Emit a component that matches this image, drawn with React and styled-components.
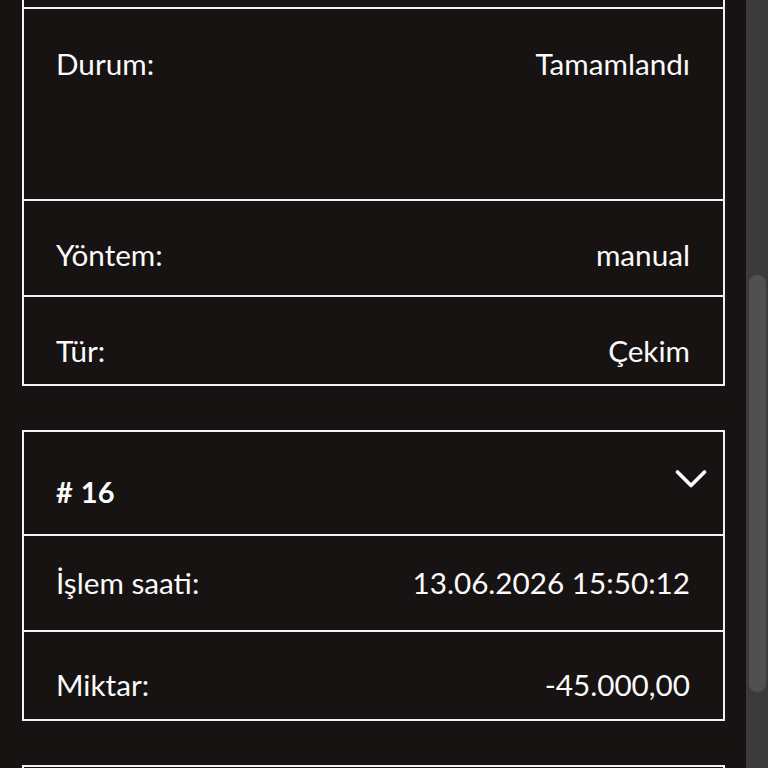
import React from 'react';
import styled, { createGlobalStyle } from 'styled-components';

const GlobalStyle = createGlobalStyle`
  html, body {
    margin: 0;
    padding: 0;
    background: #161312;
  }
  body {
    font-family: Lato, "Open Sans", sans-serif;
    color: #fafafa;
  }
`

const Page = styled.div`
  display: flex;
  height: 768px;
  overflow: hidden;
  background: #161312;
`
const List = styled.div`
  flex: 1;
  display: flex;
  flex-direction: column;
  gap: 44px;
  padding: 0 21px 0 22px;
`
const Card = styled.div`
  flex-shrink: 0;
  border: 2px solid #f2f2f2;
  border-top-style: ${p => (p.$cut ? 'none' : 'solid')};
  display: flex;
  flex-direction: column;
  min-height: ${p => p.$minHeight || 0}px;
`
const Row = styled.div`
  display: flex;
  justify-content: space-between;
  align-items: flex-start;
  padding: ${p => p.$top}px 33px ${p => p.$bottom}px 32px;
  font-size: 29.7px;
  line-height: 34px;
  & + & {
    border-top: 2px solid #f2f2f2;
  }
`
const HeaderRow = styled(Row)`
  padding-right: 16px;
  font-weight: 700;
  font-size: 29px;
`
const Label = styled.span``
const Value = styled.span`
  text-align: right;
`
const Hash = styled.span`
  margin-right: 8px;
`
const Chevron = styled.svg`
  width: 32px;
  height: 20px;
  margin-top: -6px;
  flex-shrink: 0;
`
const Track = styled.div`
  width: 22px;
  background: #3b3b3b;
  display: flex;
  justify-content: center;
`
const Thumb = styled.div`
  width: 17px;
  height: 417px;
  margin-top: 275px;
  background: #505050;
  border-radius: 8px;
`

const ChevronDown = () => (
  <Chevron viewBox="0 0 32 20">
    <path d="M2.5 3 L16 16.5 L29.5 3" fill="none" stroke="#fafafa" strokeWidth="3.6" strokeLinecap="round" strokeLinejoin="round" />
  </Chevron>
)

const Field = ({ label, value, top, bottom }) => (
  <Row $top={top} $bottom={bottom}>
    <Label>{label}</Label>
    <Value>{value}</Value>
  </Row>
)

export default function App() {
  return (
    <Page>
      <GlobalStyle />
      <List>
        <Card $cut>
          <Row $top={7} $bottom={0} />
          <Field label="Durum:" value="Tamamlandı" top={38} bottom={118} />
          <Field label="Yöntem:" value="manual" top={37} bottom={23} />
          <Field label="Tür:" value="Çekim" top={37} bottom={16} />
        </Card>
        <Card>
          <HeaderRow $top={43} $bottom={25}>
            <Label><Hash>#</Hash>16</Label>
            <ChevronDown />
          </HeaderRow>
          <Field label="İşlem saati:" value="13.06.2026 15:50:12" top={30} bottom={30} />
          <Field label="Miktar:" value="-45.000,00" top={36} bottom={17} />
        </Card>
        <Card $minHeight={104} />
      </List>
      <Track>
        <Thumb />
      </Track>
    </Page>
  );
}
